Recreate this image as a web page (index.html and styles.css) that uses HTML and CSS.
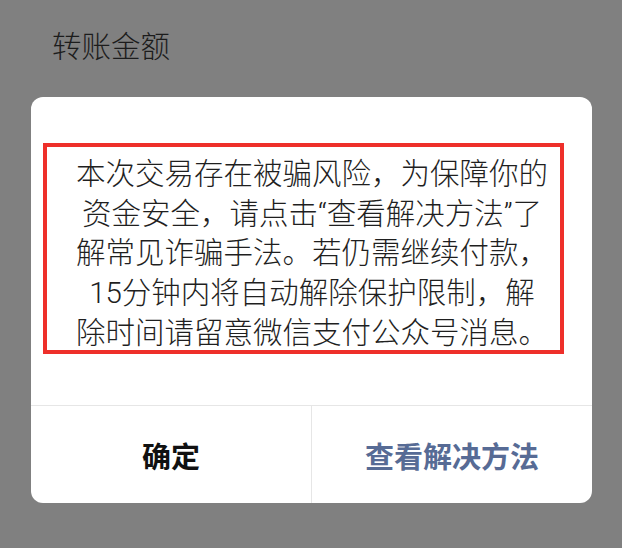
FILE: index.html
```html
<!DOCTYPE html>
<html lang="zh-CN">
<head>
<meta charset="utf-8">
<title>转账金额</title>
<link rel="stylesheet" href="styles.css">
</head>
<body>
<div class="page">
  <div class="title">转账金额</div>
  <div class="dialog">
    <div class="dialog-body">
      <div class="annot">
        <p class="msg">本次交易存在被骗风险，为保障你的<br>资金安全，请点击“查看解决方法”了<br>解常见诈骗手法。若仍需继续付款，<br>15分钟内将自动解除保护限制，解<br>除时间请留意微信支付公众号消息。</p>
      </div>
    </div>
    <div class="dialog-actions">
      <div class="btn btn-ok">确定</div>
      <div class="btn btn-link">查看解决方法</div>
    </div>
  </div>
</div>
</body>
</html>
```

FILE: styles.css
```css
html, body {
  margin: 0;
  padding: 0;
}
body {
  background: #808080;
  width: 622px;
  height: 548px;
  overflow: hidden;
  font-family: Roboto, "Noto Sans CJK SC", sans-serif;
}
.page {
  padding-top: 27px;
}
.title {
  padding-left: 52px;
  font-size: 29.5px;
  font-weight: 300;
  line-height: 40px;
  color: #1c1c1c;
}
.dialog {
  margin: 30px 30px 0 31px;
  background: #ffffff;
  border-radius: 12px;
  overflow: hidden;
}
.dialog-body {
  padding: 46px 28px 51px 12px;
}
.annot {
  box-sizing: border-box;
  height: 211px;
  border: 4px solid #ee2f2a;
  padding: 8px 0 0 17px;
}
.msg {
  margin: 0;
  text-align: center;
  font-size: 29.5px;
  font-weight: 300;
  line-height: 39.7px;
  color: #1f1f1f;
  white-space: nowrap;
}
.dialog-actions {
  display: flex;
  border-top: 1px solid #e6e6e6;
  height: 97px;
}
.btn {
  flex: 1;
  display: flex;
  align-items: center;
  justify-content: center;
  font-size: 29px;
  font-weight: 700;
}
.btn-ok {
  color: #111111;
  border-right: 1px solid #e6e6e6;
}
.btn-link {
  color: #576b95;
}
```
